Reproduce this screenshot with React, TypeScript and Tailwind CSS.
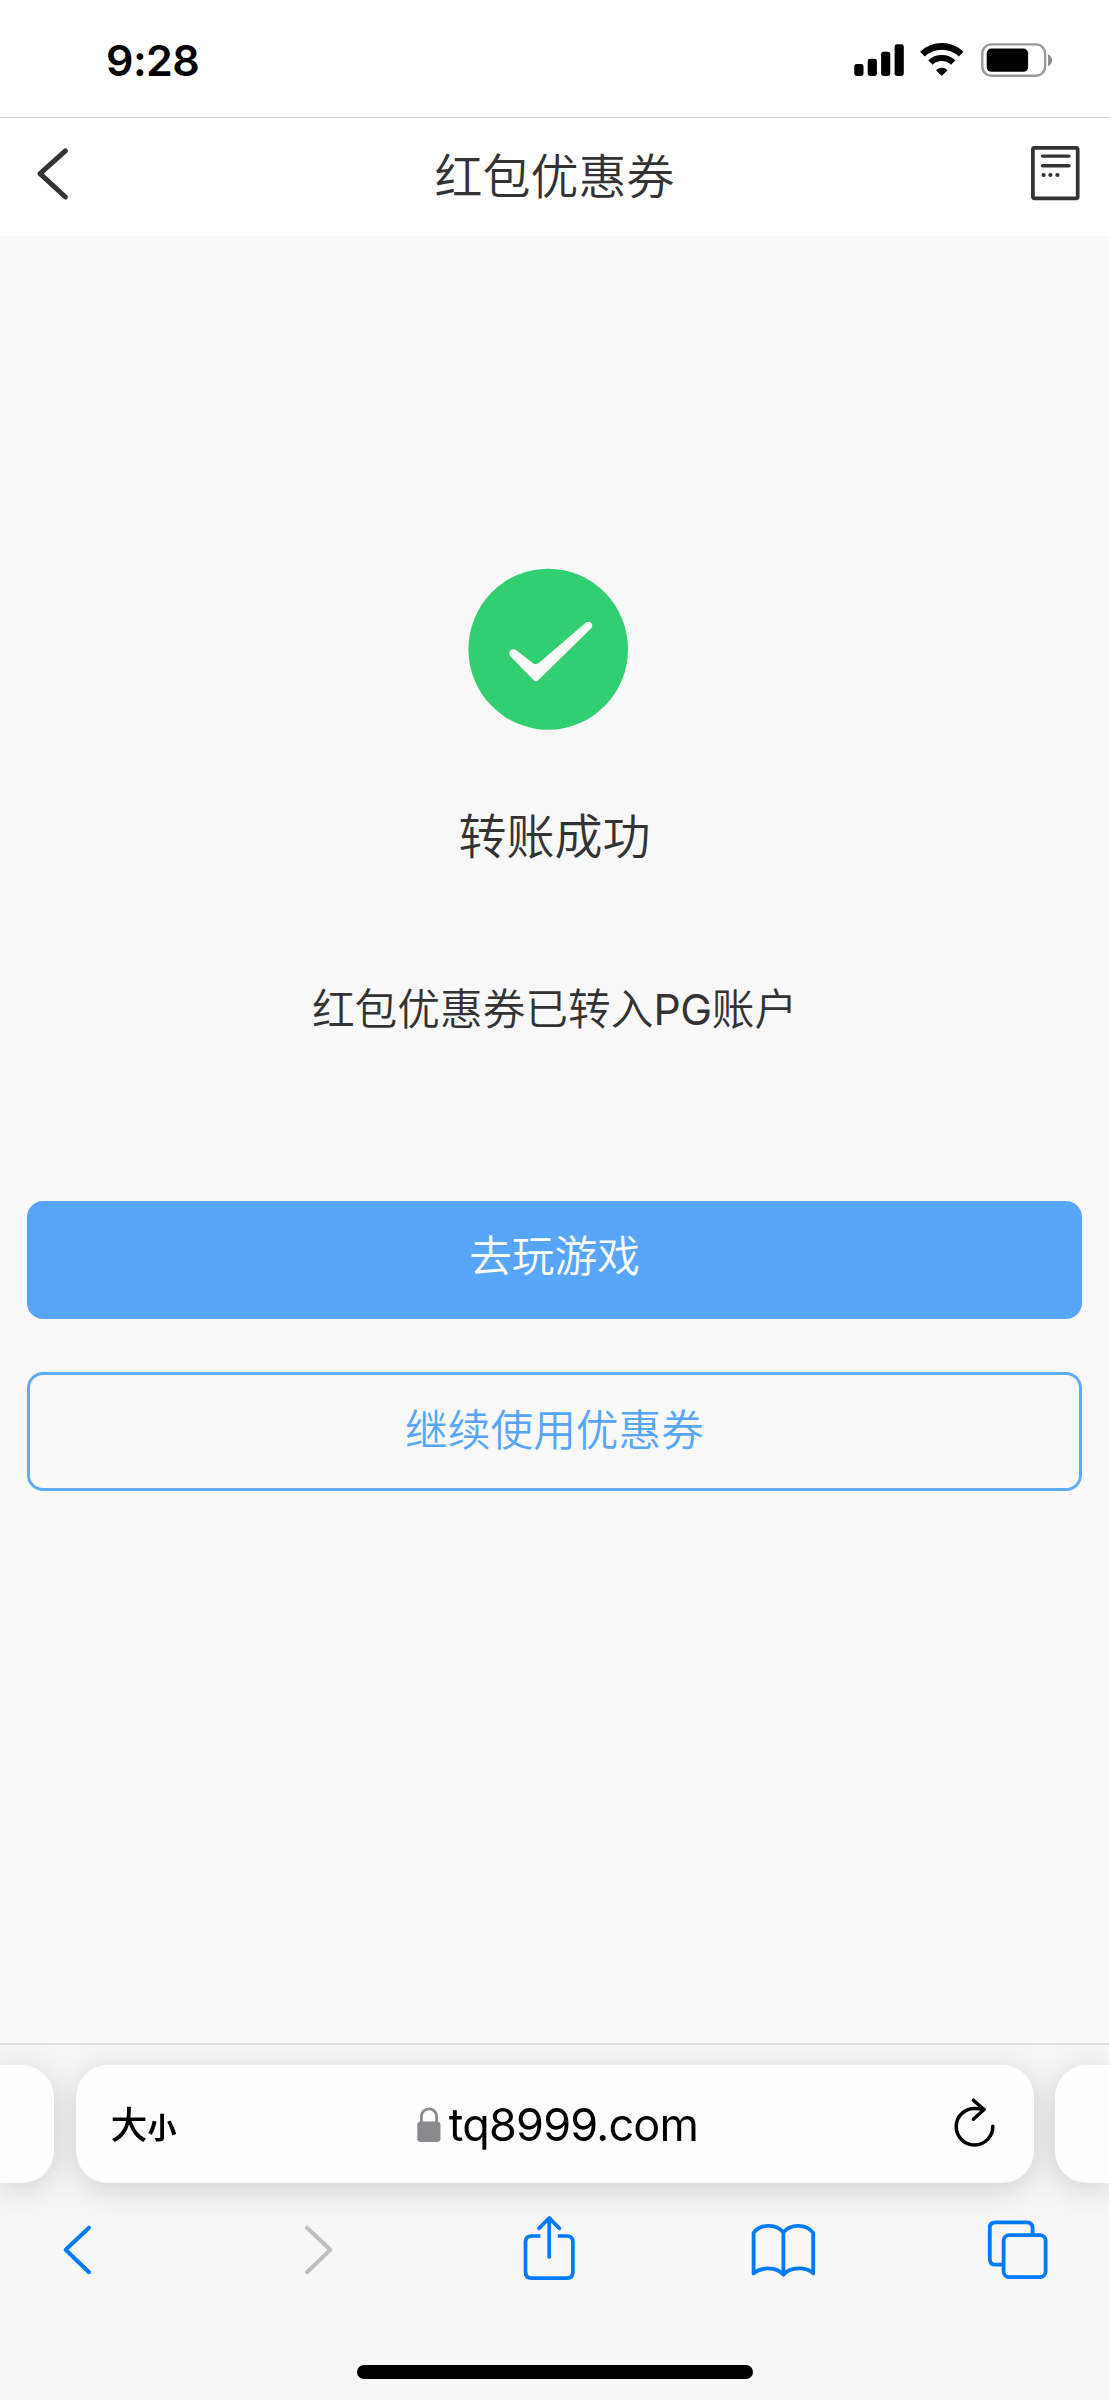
import React from "react";

function SignalIcon() {
  return (
    <svg width="50" height="34" viewBox="0 0 50 34" fill="#000">
      <rect x="0.3" y="21" width="9.2" height="12" rx="2.4" />
      <rect x="13.7" y="15.7" width="9.2" height="17.3" rx="2.4" />
      <rect x="27.1" y="8.7" width="9.2" height="24.3" rx="2.4" />
      <rect x="40.6" y="1.3" width="9.2" height="31.7" rx="2.4" />
    </svg>
  );
}

function WifiIcon() {
  return (
    <svg width="44" height="34" viewBox="0 0 44 34" fill="none" stroke="#000">
      <path d="M2.4 11.2 A28 28 0 0 1 41.2 11.2" strokeWidth="6.6" />
      <path d="M10.4 19.6 A16.4 16.4 0 0 1 33.2 19.6" strokeWidth="6.2" />
      <path d="M21.8 33 L16 27.2 A8.2 8.2 0 0 1 27.6 27.2 Z" fill="#000" stroke="none" />
    </svg>
  );
}

function BatteryIcon() {
  return (
    <svg width="72" height="34" viewBox="0 0 72 34" fill="none">
      <rect x="1.3" y="1.4" width="62.8" height="31.4" rx="9" stroke="#999" strokeWidth="2.4" />
      <rect x="5.7" y="5.6" width="41.4" height="23.2" rx="4.6" fill="#000" />
      <path d="M67 11.2 Q71.2 13.5 71.2 17.2 Q71.2 21 67 23.2 Z" fill="#8c8c8c" />
    </svg>
  );
}

function StatusBar() {
  return (
    <div className="flex h-[118px] items-start justify-between border-b border-[#cccccc] bg-white pl-[106px] pr-[56px]">
      <span className="mt-[33px] font-['Inter'] text-[43px] font-semibold leading-[54px] tracking-[-0.6px] text-black">
        9:28
      </span>
      <div className="mt-[43px] flex">
        <SignalIcon />
        <div className="ml-[16px]">
          <WifiIcon />
        </div>
        <div className="ml-[17px]">
          <BatteryIcon />
        </div>
      </div>
    </div>
  );
}

function Header() {
  return (
    <header className="flex h-[118px] items-start justify-between bg-white pl-[36px] pr-[29px] text-[#333]">
      <svg className="mt-[28px]" width="49" height="56" viewBox="0 0 49 56" fill="none" stroke="#333" strokeWidth="5" strokeLinecap="round" strokeLinejoin="round">
        <path d="M29.4 4.8 L4 27.7 L29.4 51" />
      </svg>
      <h1 className="mt-[23px] pr-[7px] text-[48px] leading-[72px] font-[350]">红包优惠券</h1>
      <svg className="mt-[28px]" width="49" height="56" viewBox="0 0 49 56" fill="none" stroke="#333" strokeLinecap="round">
        <rect x="1.9" y="1.9" width="44.8" height="50.4" rx="1.6" strokeWidth="3.7" />
        <path d="M11.5 10.1 H38 M11.5 19.8 H38" strokeWidth="3.4" />
        <g fill="#333" stroke="none">
          <circle cx="12.6" cy="29" r="2.1" />
          <circle cx="19.4" cy="29" r="2.1" />
          <circle cx="26.4" cy="29" r="2.1" />
        </g>
      </svg>
    </header>
  );
}

function SuccessIcon() {
  return (
    <svg className="mr-[12px]" width="161" height="162" viewBox="0 0 161 162">
      <ellipse cx="80.2" cy="81.2" rx="79.8" ry="80.5" fill="#32ce72" />
      <path
        d="M48.4 82.2 C45.2 80 41.5 81.7 41.3 85.4 C41.3 87 42.1 88.1 43 89.1 L66 112.6 Q68 114.6 70 112.6 L123.2 60.3 C124.6 58.8 124.7 56.8 123.4 55.2 C121.8 53.2 119.2 53.5 117.4 55 L71 94.8 Q68 97.3 64.8 94.9 Z"
        fill="#fafafa"
      />
    </svg>
  );
}

function Result() {
  return (
    <main className="flex h-[1807px] flex-col items-center px-[27px] text-[#333]">
      <div className="mt-[332px]">
        <SuccessIcon />
      </div>
      <h2 className="mt-[71px] text-[48px] leading-[72px] font-[350]">转账成功</h2>
      <p className="mt-[105px] text-[42.7px] font-[350] leading-[64px]">
        红包优惠券已转入<span className="font-normal tracking-[-0.4px]">PG</span>账户
      </p>
      <button className="mt-[159px] h-[118px] w-full rounded-[16px] bg-[#57a6fb] pb-[7px] text-[42.7px] font-[350] leading-[64px] text-white">
        去玩游戏
      </button>
      <button className="mt-[53px] h-[119px] w-full rounded-[16px] border-[3px] border-[#5eaafb] pb-[1px] text-[42.7px] font-[350] leading-[64px] text-[#57a6fb]">
        继续使用优惠券
      </button>
    </main>
  );
}

function AddressBar() {
  return (
    <div className="mt-[20px] flex h-[118px] gap-[21.5px] drop-shadow-[0_6px_16px_rgba(0,0,0,0.16)]">
      <div className="w-[54px] shrink-0 rounded-r-[32px] bg-[#fdfdfd]" />
      <div className="flex flex-1 items-start justify-between rounded-[32px] bg-[#fdfdfd] pl-[35px] pr-[37px] text-black">
        <span className="mt-[31px] flex w-[88px] items-baseline leading-[60px]">
          <span className="text-[37px] font-medium">大</span>
          <span className="text-[29px] font-bold">小</span>
        </span>
        <span className="mt-[30px] flex items-start">
          <svg className="mt-[12px]" width="24" height="36" viewBox="0 0 24 36" fill="none">
            <path d="M4.4 16 V9.6 A7.6 7.8 0 0 1 19.6 9.6 V16" stroke="#8a8a8e" strokeWidth="2.8" />
            <rect x="0.3" y="14.4" width="23.2" height="20.6" rx="3.4" fill="#8a8a8e" />
          </svg>
          <span className="ml-[8px] font-['Inter'] text-[45px] leading-[60px] tracking-[-0.8px]">tq8999.com</span>
        </span>
        <span className="mt-[32px] flex w-[80px] justify-end">
          <svg width="42" height="52" viewBox="0 0 42 52" fill="none" stroke="#000" strokeWidth="3.5" strokeLinecap="round" strokeLinejoin="round">
            <path d="M38.8 29.3 A18.3 18.3 0 1 1 20.5 11.4 Q26 11.3 30 12.5" />
            <path d="M19.4 3.2 L30 12.5 L19.4 22.2" />
          </svg>
        </span>
      </div>
      <div className="w-[54px] shrink-0 rounded-l-[32px] bg-[#fdfdfd]" />
    </div>
  );
}

function Toolbar() {
  return (
    <nav className="relative mt-[31px] flex h-[70px] pl-[62px]">
      <svg width="32" height="70" viewBox="0 0 32 70" fill="none" stroke="#007aff" strokeWidth="4" strokeLinecap="round" strokeLinejoin="round">
        <path d="M27 13.7 L3.6 35.7 L27 58.2" />
      </svg>
      <svg className="ml-[208px]" width="32" height="70" viewBox="0 0 32 70" fill="none" stroke="#bfbfbf" strokeWidth="4" strokeLinecap="round" strokeLinejoin="round">
        <path d="M5 13.7 L28.4 35.7 L5 58.2" />
      </svg>
      <svg className="ml-[188px]" width="54" height="70" viewBox="0 0 54 70" fill="none" stroke="#007aff" strokeWidth="3.7">
        <path d="M18.4 22 H9.6 Q3.5 22 3.5 28.1 V58.1 Q3.5 64.2 9.6 64.2 H44.8 Q50.9 64.2 50.9 58.1 V28.1 Q50.9 22 44.8 22 H35.8" />
        <path d="M27.2 43 V4 M17 14.4 L27.2 4 L37.4 14.4" strokeLinecap="round" strokeLinejoin="round" />
      </svg>
      <svg className="ml-[174px]" width="66" height="70" viewBox="0 0 66 70" fill="none" stroke="#007aff" strokeWidth="3.8" strokeLinecap="round" strokeLinejoin="round">
        <path d="M33.4 18.4 C26.4 9.6 10.6 9.6 3.6 18.8 V59.4 C11 52.8 26 52.4 33.4 60.6 C40.8 52.4 56 52.8 63.2 59.4 V18.8 C56.2 9.6 40.4 9.6 33.4 18.4 Z" />
        <path d="M33.4 18.4 V60.6" />
      </svg>
      <svg className="ml-[168px]" width="64" height="70" viewBox="0 0 64 70" fill="none" stroke="#007aff" strokeWidth="3.8">
        <path d="M18 50.7 H11.6 Q5.8 50.7 5.8 44.9 V13.8 Q5.8 8.4 11.6 8.4 H42.8 Q48.6 8.4 48.6 14.2 V21" />
        <rect x="19.6" y="21.1" width="42" height="42" rx="5.6" />
      </svg>
    </nav>
  );
}

function BrowserChrome() {
  return (
    <footer className="flex h-[357px] flex-col border-t-2 border-[#dedede] bg-[#f7f7f7]">
      <AddressBar />
      <Toolbar />
      <div className="mx-auto mt-[81px] h-[14px] w-[396px] rounded-full bg-black" />
    </footer>
  );
}

export default function App() {
  return (
    <div className="flex h-[2400px] w-[1109px] flex-col overflow-hidden bg-[#f9f9f9] font-['Inter','Noto_Sans_CJK_SC',sans-serif]">
      <StatusBar />
      <Header />
      <Result />
      <BrowserChrome />
    </div>
  );
}
